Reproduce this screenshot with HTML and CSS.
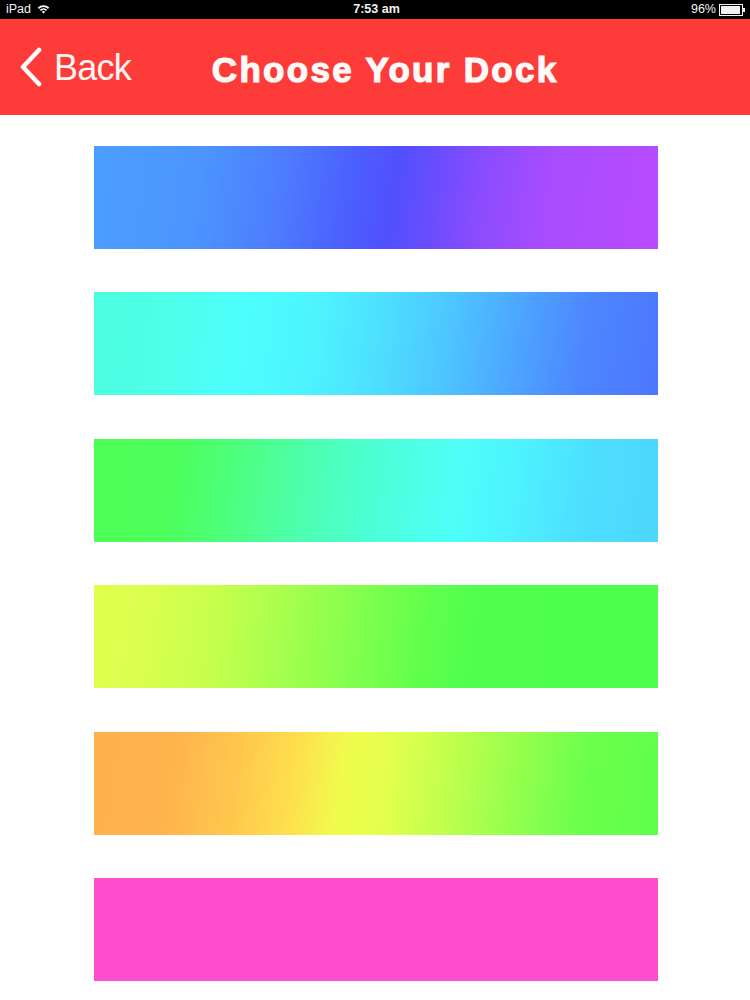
FILE: index.html
```html
<!DOCTYPE html>
<html lang="en">
<head>
<meta charset="utf-8">
<title>Choose Your Dock</title>
<link rel="stylesheet" href="styles.css">
</head>
<body>
<div class="statusbar">
  <div class="sb-left">
    <span class="sb-text">iPad</span>
    <svg class="wifi" width="13" height="10" viewBox="0 0 13 10">
      <path d="M0.8 3.6 A8 8 0 0 1 12.2 3.6 L11 4.9 A6.2 6.2 0 0 0 2 4.9 Z" fill="#fff"/>
      <path d="M2.8 5.7 A5.2 5.2 0 0 1 10.2 5.7 L9 7 A3.5 3.5 0 0 0 4 7 Z" fill="#fff"/>
      <path d="M4.8 7.8 A2.5 2.5 0 0 1 8.2 7.8 L6.5 9.6 Z" fill="#fff"/>
    </svg>
  </div>
  <span class="sb-text sb-time">7:53 am</span>
  <div class="sb-right">
    <span class="sb-text">96%</span>
    <span class="battery"><span class="battery-fill"></span></span>
    <span class="battery-nub"></span>
  </div>
</div>
<header class="navbar">
  <div class="back">
    <svg class="chevron" width="24" height="40" viewBox="0 0 24 40">
      <polyline points="20,3 4,20 20,37" fill="none" stroke="#fff" stroke-width="4.5" stroke-linecap="round" stroke-linejoin="round"/>
    </svg>
    <span class="back-label">Back</span>
  </div>
  <h1 class="title">Choose Your Dock</h1>
</header>
<main class="docks">
  <div class="dock dock-blue"></div>
  <div class="dock dock-aqua"></div>
  <div class="dock dock-green"></div>
  <div class="dock dock-lime"></div>
  <div class="dock dock-orange"></div>
  <div class="dock dock-pink"></div>
</main>
</body>
</html>
```

FILE: styles.css
```css
html, body {
  margin: 0;
  padding: 0;
  background: #ffffff;
}
body {
  width: 750px;
  font-family: "Liberation Sans", Arial, sans-serif;
}
.statusbar {
  height: 19px;
  background: #000;
  color: #fff;
  display: flex;
  align-items: center;
  justify-content: space-between;
  padding: 0 5px 0 6px;
}
.sb-text {
  font-size: 12.5px;
  color: #f2f2f2;
  line-height: 19px;
}
.sb-left {
  display: flex;
  align-items: center;
  gap: 6px;
  width: 120px;
}
.wifi {
  display: block;
  margin-top: -1px;
}
.sb-time {
  font-weight: bold;
  font-size: 12.5px;
  margin-left: 2px;
}
.sb-right {
  display: flex;
  align-items: center;
  justify-content: flex-end;
  width: 120px;
}
.sb-right .sb-text {
  margin-right: 3px;
}
.battery {
  width: 20px;
  height: 8px;
  border: 1px solid #f2f2f2;
  padding: 1px;
  display: flex;
}
.battery-fill {
  flex: 1;
  background: #f2f2f2;
  margin-right: 1px;
}
.battery-nub {
  width: 2px;
  height: 4px;
  background: #f2f2f2;
}
.navbar {
  height: 96px;
  background: #fd3c39;
  display: flex;
  align-items: center;
  padding-left: 19px;
  box-sizing: border-box;
}
.back {
  display: flex;
  align-items: center;
  gap: 11px;
  color: #fff5f5;
}
.chevron {
  display: block;
}
.back-label {
  font-size: 36px;
  letter-spacing: -0.8px;
  line-height: 40px;
  margin-top: 2px;
}
.title {
  margin: 6px 0 0 81px;
  font-size: 35px;
  font-weight: bold;
  letter-spacing: 2.3px;
  color: #fffafa;
  -webkit-text-stroke: 1.2px #fffafa;
  line-height: 40px;
}
.docks {
  display: flex;
  flex-direction: column;
  gap: 43.4px;
  padding: 31px 0 0 94px;
}
.dock {
  width: 564px;
  height: 103px;
}
.dock-blue {
  background: linear-gradient(98deg, #4b9efe 0%, #4c96fe 18%, #4d7dfe 33%, #4b5efe 46%, #5150fe 53%, #6a4dfe 60%, #8a4cfe 68%, #a94cff 80%, #b84cfe 100%);
}
.dock-aqua {
  background: linear-gradient(98deg, #4cfde0 0%, #4dffe6 12%, #4dfffc 26%, #4df2ff 40%, #4ddcff 52%, #4dc6ff 62%, #4da6ff 74%, #4d86ff 86%, #4c77fc 100%);
}
.dock-green {
  background: linear-gradient(98deg, #4dff55 0%, #4dff5a 14%, #4dff80 26%, #4dffb0 38%, #4dffd6 50%, #4dfff8 64%, #4df2ff 74%, #4ddfff 86%, #4dd6fe 100%);
}
.dock-lime {
  background: linear-gradient(98deg, #e1ff4d 0%, #dbff4d 10%, #c6ff4d 22%, #a6ff4d 34%, #84ff4d 46%, #62ff4d 58%, #4eff4d 68%, #4dff4d 100%);
}
.dock-orange {
  background: linear-gradient(98deg, #ffb04d 0%, #ffb34d 14%, #ffc84d 26%, #fee04d 36%, #f0fb4d 44%, #e3ff4d 52%, #c2ff4d 62%, #96ff4d 74%, #6cff4d 86%, #5eff4b 100%);
}
.dock-pink {
  background: #fe4ecf;
}
```
